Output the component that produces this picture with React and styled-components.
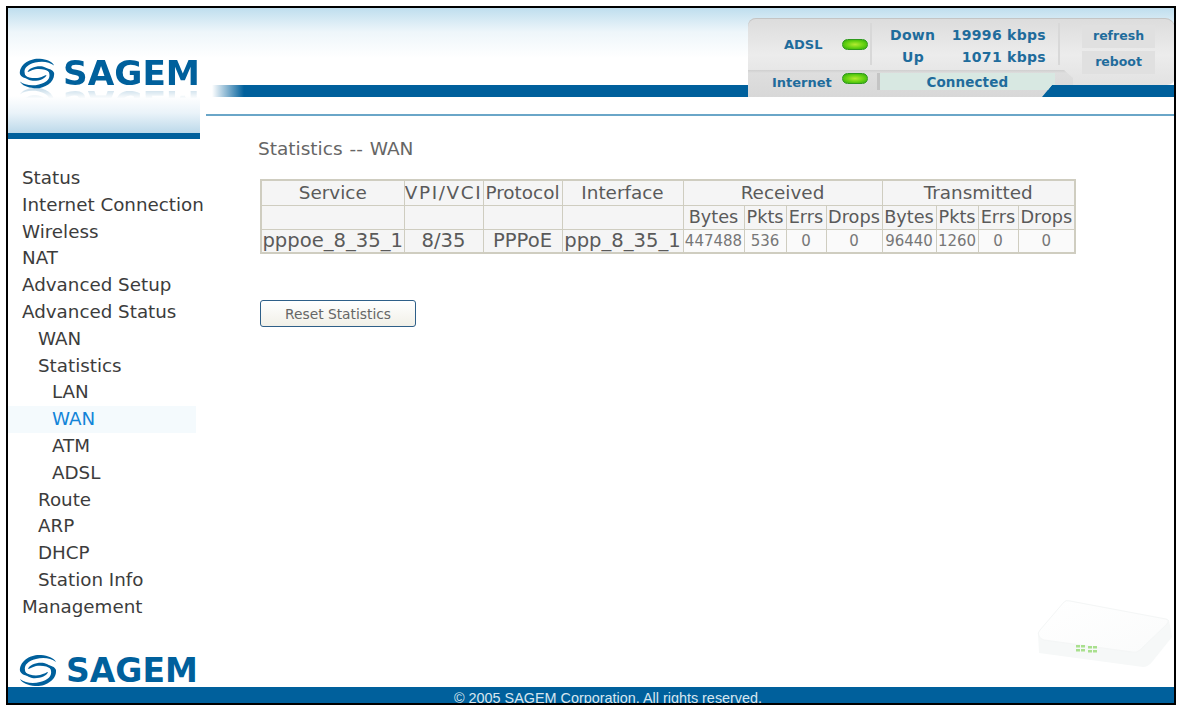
import styled, { createGlobalStyle } from "styled-components";

const GlobalStyle = createGlobalStyle`
  html, body { margin: 0; padding: 0; background: #fff; }
  body { width: 1178px; height: 707px; overflow: hidden; }
`;

const menu = [
  { label: "Status", level: 0 },
  { label: "Internet Connection", level: 0 },
  { label: "Wireless", level: 0 },
  { label: "NAT", level: 0 },
  { label: "Advanced Setup", level: 0 },
  { label: "Advanced Status", level: 0 },
  { label: "WAN", level: 1 },
  { label: "Statistics", level: 1 },
  { label: "LAN", level: 2 },
  { label: "WAN", level: 2, active: true },
  { label: "ATM", level: 2 },
  { label: "ADSL", level: 2 },
  { label: "Route", level: 1 },
  { label: "ARP", level: 1 },
  { label: "DHCP", level: 1 },
  { label: "Station Info", level: 1 },
  { label: "Management", level: 0 },
];

const indents = [14, 30, 44];
const stats = ["447488", "536", "0", "0", "96440", "1260", "0", "0"];
const subHeads = ["Bytes", "Pkts", "Errs", "Drops", "Bytes", "Pkts", "Errs", "Drops"];
const colWidths = [143, 79, 79, 121, 61, 42, 40, 56, 54, 42, 40, 57];

function Swirl() {
  const outer = "M1 17C0 7 12 0 22 1C29 1.500 35 4 37 8C32 4 24 3 17 5C9 7 5 11 6 16C6 19 9 21 12 22C6 22 2 20 1 17Z";
  const inner = "M9 15C10 11 18 8 25 9C29 10 32 12 32 15C29 12 22 11 17 12C13 13 10 15 9 15Z";
  return (
    <svg width="38" height="33" viewBox="0 0 38 33">
      <g fill="#00609c">
        <path d={outer} />
        <path d={outer} transform="rotate(180 19 16.5)" />
        <path d={inner} />
        <path d={inner} transform="rotate(180 19 16.5)" />
      </g>
    </svg>
  );
}

export default function App() {
  return (
    <Frame>
      <GlobalStyle />
      <Header>
        <LogoBox>
          <LogoRow>
            <Swirl />
            <LogoText>SAGEM</LogoText>
          </LogoRow>
          <LogoBar />
        </LogoBox>
        <HeaderMain>
          <HeaderBand />
          <HeaderLine />
          <StatusPanel>
            <AdslCell>
              ADSL <Led />
            </AdslCell>
            <RatesCell>
              <RateRow>
                <span>Down</span>
                <span>19996 kbps</span>
              </RateRow>
              <RateRow>
                <RateLabel>Up</RateLabel>
                <span>1071 kbps</span>
              </RateRow>
            </RatesCell>
            <PanelButtons>
              <PanelButton>refresh</PanelButton>
              <PanelButton>reboot</PanelButton>
            </PanelButtons>
            <InternetTab>
              <InternetLabel>Internet</InternetLabel>
              <Led />
              <ConnectedBox>Connected</ConnectedBox>
            </InternetTab>
          </StatusPanel>
        </HeaderMain>
      </Header>

      <Body>
        <Sidebar>
          <Menu>
            {menu.map((item, i) => (
              <MenuItem key={i} $level={item.level} $active={item.active}>
                {item.label}
              </MenuItem>
            ))}
          </Menu>
          <FooterLogo>
            <Swirl />
            <FooterLogoText>SAGEM</FooterLogoText>
          </FooterLogo>
        </Sidebar>

        <Content>
          <PageTitle>Statistics -- WAN</PageTitle>
          <StatsTable>
            <colgroup>
              {colWidths.map((w, i) => (
                <col key={i} width={w} />
              ))}
            </colgroup>
            <tbody>
              <HeadRow>
                <Cell>Service</Cell>
                <Cell $spread>VPI/VCI</Cell>
                <Cell>Protocol</Cell>
                <Cell>Interface</Cell>
                <Cell colSpan={4}>Received</Cell>
                <Cell colSpan={4}>Transmitted</Cell>
              </HeadRow>
              <SubRow>
                <Cell />
                <Cell />
                <Cell />
                <Cell />
                {subHeads.map((h, i) => (
                  <SubCell key={i}>{h}</SubCell>
                ))}
              </SubRow>
              <SubRow>
                <DataCell>pppoe_8_35_1</DataCell>
                <DataCell>8/35</DataCell>
                <DataCell>PPPoE</DataCell>
                <DataCell>ppp_8_35_1</DataCell>
                {stats.map((s, i) => (
                  <NumCell key={i}>{s}</NumCell>
                ))}
              </SubRow>
            </tbody>
          </StatsTable>
          <ResetButton>Reset Statistics</ResetButton>
          <Router viewBox="0 0 140 70">
            <defs>
              <linearGradient id="rtr" x1="0" y1="0" x2="1" y2="1">
                <stop offset="0" stopColor="#ffffff" />
                <stop offset="1" stopColor="#fafbfb" />
              </linearGradient>
            </defs>
            <path d="M3 53L107 67Q112 67 116 62L136 37L133 20L30 0L2 33Z" fill="#f6f8f8" />
            <path d="M3 36Q1 33 4 30L28 2Q30 0 34 1L130 19Q134 20 131 24L104 50Q101 53 96 52L8 40Q4 39 3 36Z" fill="url(#rtr)" stroke="#f4f6f6" />
            <g fill="#a9e08e">
              <rect x="40" y="45" width="4" height="2.500" />
              <rect x="45" y="45" width="4" height="2.500" />
              <rect x="52" y="46" width="4" height="2.500" />
              <rect x="57" y="46" width="4" height="2.500" />
              <rect x="40" y="49" width="4" height="2.500" />
              <rect x="45" y="49" width="4" height="2.500" />
              <rect x="52" y="50" width="4" height="2.500" />
              <rect x="57" y="50" width="4" height="2.500" />
            </g>
          </Router>
        </Content>
      </Body>

      <Footer>© 2005 SAGEM Corporation. All rights reserved.</Footer>
    </Frame>
  );
}

const Frame = styled.div`
  position: relative;
  box-sizing: border-box;
  width: 1178px;
  height: 707px;
  padding: 6px 2px 2px 6px;
  background: #fff;
  display: flex;
  flex-direction: column;
  &::before {
    content: "";
    position: absolute;
    left: 6px;
    top: 6px;
    right: 2px;
    bottom: 2px;
    border: 2px solid #000;
    pointer-events: none;
    z-index: 5;
  }
`;

const Header = styled.div`
  display: flex;
  height: 134px;
  padding: 2px 2px 0 2px;
  flex-shrink: 0;
`;

const LogoBox = styled.div`
  position: relative;
  box-sizing: border-box;
  width: 192px;
  height: 131px;
  padding-top: 49px;
  background: linear-gradient(#bfdeee 0, #eef6fa 24px, #fff 50px, #fff 88px, #eaf3f9 105px, #bcd9ea 125px);
`;

const LogoRow = styled.div`
  display: flex;
  align-items: center;
  gap: 8px;
  padding-left: 11px;
  height: 33px;
  -webkit-box-reflect: below -4px linear-gradient(transparent 62%, rgba(255, 255, 255, 0.28));
`;

const LogoText = styled.div`
  font-family: "DejaVu Sans", sans-serif;
  font-weight: 700;
  font-size: 34.3px;
  line-height: 33px;
  color: #00609c;
`;

const LogoBar = styled.div`
  position: absolute;
  left: 0;
  right: 0;
  bottom: 0;
  height: 6px;
  background: #00609c;
`;

const HeaderMain = styled.div`
  position: relative;
  flex: 1;
  background: linear-gradient(#bfdeee 0, #eef6fa 24px, #fff 50px);
`;

const HeaderBand = styled.div`
  position: absolute;
  left: 12px;
  right: 0;
  top: 77px;
  height: 12px;
  background: linear-gradient(90deg, #fff 0, #00609c 32px);
`;

const HeaderLine = styled.div`
  position: absolute;
  left: 6px;
  right: 0;
  top: 106px;
  height: 2px;
  background: #6aa6c8;
`;

const StatusPanel = styled.div`
  position: absolute;
  left: 548px;
  top: 10px;
  width: 427px;
  height: 67px;
  box-sizing: border-box;
  display: flex;
  font-family: "DejaVu Sans", sans-serif;
  font-size: 14px;
  font-weight: 700;
  color: #1f6c9c;
  background: linear-gradient(#dcdcdc, #ececec 55%, #e2e2e2);
  border-radius: 8px 10px 8px 0;
  box-shadow: inset 0 1px 0 #c4c4c4;
`;

const AdslCell = styled.div`
  box-sizing: border-box;
  width: 124px;
  height: 42px;
  margin-top: 5px;
  padding-left: 36px;
  display: flex;
  align-items: center;
  gap: 19px;
  font-size: 13px;
  border-right: 2px solid #d8d8d8;
`;

const Led = styled.span`
  display: inline-block;
  flex-shrink: 0;
  width: 26px;
  height: 11px;
  border-radius: 6px;
  background: radial-gradient(ellipse at center, #b4ea30 0, #62d010 55%, #2ea410 100%);
  border: 1px solid #2f9a1c;
  box-sizing: border-box;
`;

const RatesCell = styled.div`
  box-sizing: border-box;
  width: 188px;
  height: 42px;
  margin-top: 5px;
  padding: 1px 12px 0 18px;
  border-right: 2px solid #d8d8d8;
  line-height: 22px;
  letter-spacing: 0.3px;
`;

const RateRow = styled.div`
  display: flex;
  justify-content: space-between;
`;

const RateLabel = styled.span`
  padding-left: 12px;
`;

const PanelButtons = styled.div`
  display: flex;
  flex-direction: column;
  padding: 7px 0 0 22px;
  gap: 3px;
`;

const PanelButton = styled.div`
  width: 73px;
  height: 23px;
  line-height: 22px;
  text-align: center;
  font-size: 12.5px;
  background: #e0e0e0;
`;

const InternetTab = styled.div`
  position: absolute;
  left: 0;
  top: 52px;
  width: 325px;
  height: 27px;
  box-sizing: border-box;
  padding: 3px 0 0 24px;
  display: flex;
  align-items: flex-start;
  gap: 10px;
  font-size: 13px;
  background: linear-gradient(#cfcfcf, #dedede 3px, #d8d8d8);
  clip-path: polygon(0 0, 316px 0, 325px 8px, 325px 15px, 304px 15px, 294px 27px, 0 27px);
`;

const InternetLabel = styled.span`
  line-height: 20px;
`;

const ConnectedBox = styled.div`
  margin-left: 2px;
  width: 175px;
  height: 17px;
  line-height: 18px;
  text-align: center;
  font-size: 13.5px;
  background: #d8e8e2;
  box-shadow: -3px 0 0 #c4c4c4;
  letter-spacing: 0.1px;
`;

const Body = styled.div`
  flex: 1;
  display: flex;
  min-height: 0;
  padding-left: 2px;
`;

const Sidebar = styled.div`
  width: 224px;
  display: flex;
  flex-direction: column;
  flex-shrink: 0;
`;

const Menu = styled.div`
  padding-top: 23px;
  font-family: "DejaVu Sans", sans-serif;
  font-size: 18.3px;
`;

const MenuItem = styled.div`
  box-sizing: border-box;
  width: 188px;
  height: 26.8px;
  line-height: 26.8px;
  padding-left: ${(p) => indents[p.$level]}px;
  color: ${(p) => (p.$active ? "#1284d8" : "#3c3c3c")};
  background: ${(p) => (p.$active ? "#f4fafd" : "transparent")};
  white-space: nowrap;
`;

const FooterLogo = styled.div`
  display: flex;
  align-items: center;
  gap: 9px;
  padding: 33px 0 0 11px;
`;

const FooterLogoText = styled.div`
  font-family: "DejaVu Sans", sans-serif;
  font-weight: 700;
  font-size: 33px;
  line-height: 33px;
  color: #00609c;
`;

const Content = styled.div`
  position: relative;
  flex: 1;
  padding: 0 0 0 26px;
  font-family: "DejaVu Sans", sans-serif;
`;

const PageTitle = styled.div`
  font-size: 18.5px;
  color: #666;
  height: 37px;
  line-height: 14px;
  word-spacing: 1px;
  white-space: nowrap;
`;

const StatsTable = styled.table`
  border-collapse: collapse;
  table-layout: fixed;
  width: 814px;
  margin-left: 2px;
  border: 2px solid #cfcdc0;
`;

const HeadRow = styled.tr`
  height: 25px;
`;

const SubRow = styled.tr`
  height: 24px;
`;

const Cell = styled.td`
  padding: 0;
  border: 1px solid #cfcdc0;
  text-align: center;
  font-size: 18.4px;
  line-height: 22px;
  color: #5a5a5a;
  background: #f5f5f5;
  white-space: nowrap;
  overflow: hidden;
  letter-spacing: ${(p) => (p.$spread ? "1.6px" : "0")};
`;

const SubCell = styled(Cell)`
  font-size: 17.7px;
`;

const DataCell = styled(Cell)`
  font-size: 19.6px;
`;

const NumCell = styled(Cell)`
  font-size: 15px;
  color: #777;
  background: #fafafa;
`;

const ResetButton = styled.button`
  display: block;
  box-sizing: border-box;
  margin: 46px 0 0 2px;
  width: 156px;
  height: 27px;
  padding: 0;
  font-family: "DejaVu Sans", sans-serif;
  font-size: 13.8px;
  color: #666;
  background: linear-gradient(#fff, #f1f0e8);
  border: 1px solid #2e5f88;
  border-radius: 3px;
`;

const Router = styled.svg`
  position: absolute;
  right: 0;
  bottom: 17px;
  width: 140px;
  height: 70px;
`;

const Footer = styled.div`
  height: 16px;
  margin: 0 2px 2px 2px;
  padding-left: 34px;
  flex-shrink: 0;
  background: #00609c;
  color: #d7e6ef;
  font-family: "Liberation Sans", Arial, sans-serif;
  font-size: 14.4px;
  line-height: 22px;
  text-align: center;
  overflow: hidden;
`;
